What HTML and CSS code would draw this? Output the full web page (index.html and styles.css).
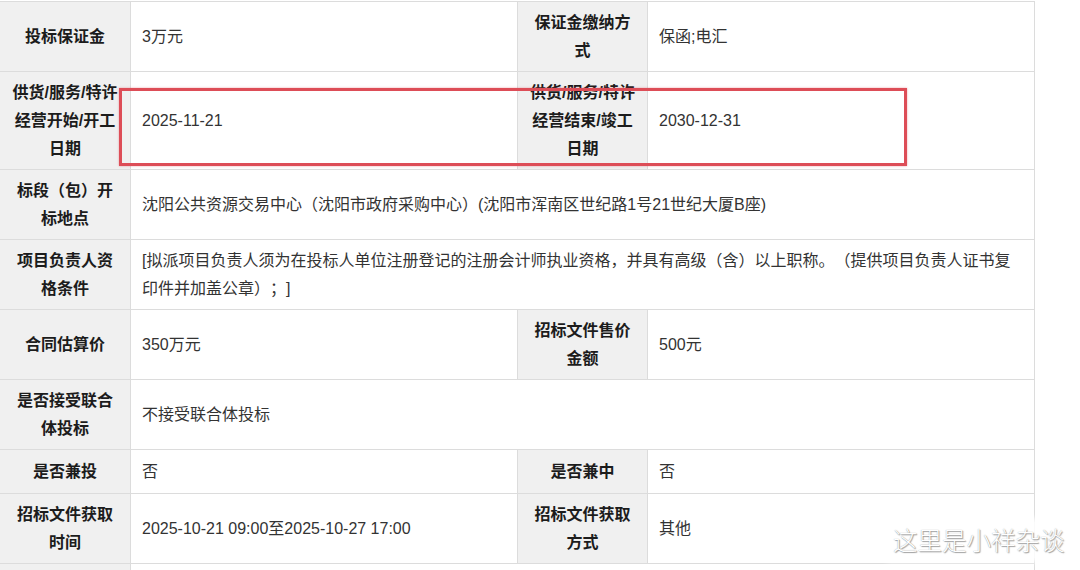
FILE: index.html
```html
<!DOCTYPE html>
<html lang="zh-CN">
<head>
<meta charset="utf-8">
<title>招标信息</title>
<link rel="stylesheet" href="styles.css">
</head>
<body>
<div class="page">
  <table class="info">
    <colgroup>
      <col class="c-label">
      <col class="c-value">
      <col class="c-label2">
      <col class="c-value2">
    </colgroup>
    <tbody>
      <tr>
        <th>投标保证金</th>
        <td>3万元</td>
        <th>保证金缴纳方式</th>
        <td>保函;电汇</td>
      </tr>
      <tr>
        <th>供货/服务/特许经营开始/开工日期</th>
        <td>2025-11-21</td>
        <th>供货/服务/特许经营结束/竣工日期</th>
        <td>2030-12-31</td>
      </tr>
      <tr>
        <th>标段（包）开标地点</th>
        <td colspan="3">沈阳公共资源交易中心（沈阳市政府采购中心）(沈阳市浑南区世纪路1号21世纪大厦B座)</td>
      </tr>
      <tr>
        <th>项目负责人资格条件</th>
        <td colspan="3">[拟派项目负责人须为在投标人单位注册登记的注册会计师执业资格，并具有高级（含）以上职称。（提供项目负责人证书复印件并加盖公章）；]</td>
      </tr>
      <tr>
        <th>合同估算价</th>
        <td>350万元</td>
        <th>招标文件售价金额</th>
        <td>500元</td>
      </tr>
      <tr>
        <th>是否接受联合体投标</th>
        <td colspan="3">不接受联合体投标</td>
      </tr>
      <tr>
        <th>是否兼投</th>
        <td>否</td>
        <th>是否兼中</th>
        <td>否</td>
      </tr>
      <tr>
        <th>招标文件获取时间</th>
        <td>2025-10-21 09:00至2025-10-27 17:00</td>
        <th>招标文件获取方式</th>
        <td>其他</td>
      </tr>
      <tr>
        <th>&nbsp;</th>
        <td colspan="3">&nbsp;</td>
      </tr>
    </tbody>
  </table>
  <div class="highlight"></div>
  <div class="watermark">这里是小祥杂谈</div>
</div>
</body>
</html>
```

FILE: styles.css
```css
html, body {
  margin: 0;
  padding: 0;
  background: #ffffff;
}

body {
  font-family: "Liberation Sans", "Noto Sans CJK SC", sans-serif;
  font-size: 16px;
  color: #333333;
  overflow: hidden;
  text-spacing-trim: space-all;
}

.page {
  position: relative;
  width: 1080px;
  height: 570px;
  overflow: hidden;
  padding-top: 1px;
  box-sizing: border-box;
}

.info {
  margin-left: -1px;
  width: 1035px;
  table-layout: fixed;
  border-collapse: collapse;
}

.c-label { width: 131px; }
.c-value { width: 387px; }
.c-label2 { width: 130px; }
.c-value2 { width: 387px; }

.info tr {
  height: 44px;
}

.info th,
.info td {
  border: 1px solid #dcdcdc;
  line-height: 28px;
  vertical-align: middle;
  text-spacing-trim: space-all;
}

.info th {
  background: #f0f0f0;
  color: #1c1c1c;
  font-weight: 700;
  text-align: center;
  padding: 7px 10px 6px;
}

.info td {
  background: #ffffff;
  text-align: left;
  padding: 7px 11px 6px;
  color: #333333;
}

.highlight {
  position: absolute;
  left: 119px;
  top: 88px;
  width: 788px;
  height: 78px;
  box-sizing: border-box;
  border: 3px solid #dd4d57;
  box-shadow: 0 0 2px rgba(221, 77, 87, 0.5);
}

.watermark {
  position: absolute;
  left: 891px;
  top: 522px;
  padding: 2px 2px;
  font-family: "Noto Sans CJK SC", sans-serif;
  font-weight: 300;
  font-size: 24.5px;
  line-height: 32px;
  color: #ffffff;
  background: rgba(255, 255, 255, 0.85);
  box-shadow: 0 0 6px 4px rgba(255, 255, 255, 0.85);
  text-shadow: 0 0 1px rgba(70, 70, 70, 0.55), 1px 1px 1px rgba(90, 90, 90, 0.55);
}
```
